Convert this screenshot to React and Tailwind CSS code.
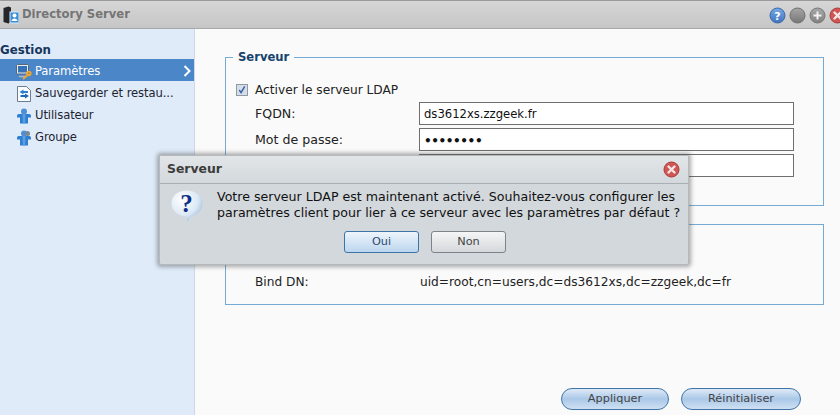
import React from 'react';

const font = { fontFamily: '"DejaVu Sans", Verdana, sans-serif' };

const RoundButton = ({ from, to, border, children }) => (
  <svg width="17" height="17" viewBox="0 0 17 17" className="shrink-0">
    <defs>
      <linearGradient id={`g${from.slice(1)}`} x1="0" y1="0" x2="0" y2="1">
        <stop offset="0" stopColor={from} />
        <stop offset="1" stopColor={to} />
      </linearGradient>
    </defs>
    <circle cx="8.5" cy="8.5" r="7.5" fill={`url(#g${from.slice(1)})`} stroke={border} />
    {children}
  </svg>
);

const CloseIcon = () => (
  <svg width="17" height="17" viewBox="0 0 17 17" className="shrink-0">
    <circle cx="8.5" cy="8.5" r="7.5" fill="#cf5654" stroke="#a83a3a" />
    <path d="M5.5 5.5l6 6M11.5 5.5l-6 6" stroke="#f4e6e6" strokeWidth="2.4" strokeLinecap="round" />
  </svg>
);

const AppIcon = () => (
  <svg width="16" height="18" viewBox="0 0 16 18" className="shrink-0">
    <path d="M0.500 2l5-1.500 2.500 1v14.500l-2.500 1.500-5-1.500z" fill="#26262a" />
    <rect x="7" y="6" width="9" height="11" fill="#3a8fd8" stroke="#d8e8f6" />
    <circle cx="11.500" cy="9.500" r="2" fill="#fff" />
    <path d="M8.500 15c0-3.500 6-3.500 6 0z" fill="#fff" />
  </svg>
);

const SettingsIcon = () => (
  <svg width="16" height="16" viewBox="0 0 16 16">
    <rect x="0.500" y="0.500" width="12" height="9.500" rx="1" fill="#e6ecf3" stroke="#56667a" />
    <rect x="2" y="2" width="9" height="6.500" fill="#3572b8" />
    <path d="M3 12.500h7" stroke="#aeb8c4" strokeWidth="1.500" />
    <circle cx="12.800" cy="9.500" r="2.800" fill="#eaa73a" />
    <circle cx="13" cy="9.300" r="0.800" fill="#a86f18" />
    <path d="M11 11.500l-4 3.500" stroke="#eaa73a" strokeWidth="2" />
  </svg>
);

const BackupIcon = () => (
  <svg width="16" height="16" viewBox="0 0 16 16">
    <path d="M1.500 0.500h9l4 4v11h-13z" fill="#fafcff" stroke="#6f7c8c" />
    <path d="M7.500 3.500l-4 2.500 4 2.500v-1.500h4.500v-2h-4.500z" fill="#2f7fd0" />
    <path d="M9 7.500l4 2.500-4 2.500v-1.500h-4.500v-2h4.500z" fill="#1f68b8" />
  </svg>
);

const UserIcon = ({ badge }) => (
  <svg width="16" height="16" viewBox="0 0 16 16">
    <circle cx="8" cy="3.500" r="3" fill="#4d8fd6" />
    {badge && <circle cx="11.500" cy="3.500" r="2.500" fill="#7c8794" />}
    <path d="M1 8c0-1.500 1-2 2-2h10c1 0 2 .5 2 2v1.500h-3v6h-8v-6h-3z" fill="#2f7fd0" />
    <path d="M6.500 6h3l-.5 9.500h-2z" fill="#5c9fe2" />
  </svg>
);

const GroupIcon = () => <UserIcon badge />;

const QuestionBubble = () => (
  <svg width="34" height="34" viewBox="0 0 34 34" className="shrink-0">
    <defs>
      <radialGradient id="bubble" cx="0.35" cy="0.3" r="0.85">
        <stop offset="0" stopColor="#ffffff" />
        <stop offset="0.6" stopColor="#dbe8f4" />
        <stop offset="1" stopColor="#86aed4" />
      </radialGradient>
    </defs>
    <path d="M17 1.500c8.500 0 15.500 5.500 15.500 13s-7 12.500-11.500 13l-3.500 5-1.500-5c-7-.5-14.500-5-14.500-13s6.500-13 15.500-13z" fill="url(#bubble)" />
    <text x="16.500" y="23" textAnchor="middle" fontSize="25" fontWeight="700" fill="#0d2f86" style={{ fontFamily: '"Liberation Serif", serif' }}>?</text>
  </svg>
);

const menu = [
  { label: 'Paramètres', Icon: SettingsIcon, active: true },
  { label: 'Sauvegarder et restau...', Icon: BackupIcon },
  { label: 'Utilisateur', Icon: UserIcon },
  { label: 'Groupe', Icon: GroupIcon },
];

const Field = ({ label, value, mask }) => (
  <div className="flex items-center h-[22px]">
    <span className="w-[164px] shrink-0 pt-[2px] text-[12.6px] text-[#222]">{label}</span>
    <div className="w-[375px] h-[23px] border border-[#6f6f6f] bg-white pl-1 pt-[3px] flex items-center text-[11.6px] text-[#111]">
      {mask ? <span className="text-[12px] font-bold tracking-[-0.4px]">{value}</span> : value}
    </div>
  </div>
);

export default function App() {
  return (
    <div className="relative w-[840px] h-[415px] overflow-hidden flex flex-col text-[12px] bg-[#fafafa]" style={font}>
      {/* Title bar */}
      <header className="h-[29px] shrink-0 flex items-center pl-[3px] border-t border-t-[#9a9a9a] border-b border-b-[#a8a8a8] bg-gradient-to-b from-[#d6d6d6] to-[#c6c6c6]">
        <AppIcon />
        <span className="ml-[3px] pt-[1px] text-[11.6px] font-bold text-[#757575]">Directory Server</span>
        <div className="ml-auto flex items-center gap-[3px] -mr-[6px] pt-[1px]">
          <RoundButton from="#79a9e2" to="#3d74c0" border="#3a68a8">
            <text x="8.500" y="12.500" textAnchor="middle" fontSize="11" fontWeight="700" fill="#fff">?</text>
          </RoundButton>
          <RoundButton from="#a6a6a6" to="#777777" border="#6e6e6e" />
          <RoundButton from="#a8a8a8" to="#808080" border="#767676">
            <path d="M8.500 4.500v8M4.500 8.500h8" stroke="#f2f2f2" strokeWidth="2" />
          </RoundButton>
          <CloseIcon />
        </div>
      </header>

      <div className="flex flex-1 min-h-0">
        {/* Sidebar */}
        <aside className="w-[195px] shrink-0 bg-[#e0ebfa] border-r border-r-[#cfd8e4] pt-[13px]">
          <h2 className="h-[17px] leading-[16px] text-[11.8px] font-bold text-[#16365c]">Gestion</h2>
          <ul className="text-[11.6px]">
            {menu.map(({ label, Icon, active }) => (
              <li
                key={label}
                className={`h-[22px] flex items-center pl-4 pr-[3px] gap-[3px] ${active ? 'bg-[#4a86c8] text-white' : 'text-[#1c2430]'}`}
              >
                <span className="pt-[3px] flex"><Icon /></span>
                <span className="flex-1 pt-[3px] whitespace-nowrap tracking-[-0.1px]">{label}</span>
                {active && (
                  <svg width="8" height="12" viewBox="0 0 8 12" className="mt-[1px]">
                    <path d="M1.500 1l5 5-5 5" fill="none" stroke="#fff" strokeWidth="2" />
                  </svg>
                )}
              </li>
            ))}
          </ul>
        </aside>

        {/* Main */}
        <main className="flex-1 flex flex-col pl-[30px] pr-[17px] pt-[21px] pb-[5px]">
          <fieldset className="h-[156px] border border-[#74aad4] shrink-0">
            <legend className="ml-[7px] px-[5px] text-[11.6px] font-bold text-[#16436e] leading-[15px]">Serveur</legend>
            <div className="pl-[29px] pr-[29px]">
              <div className="flex items-center gap-[6px] h-[20px] mt-[15px] text-[12.2px] text-[#222]">
                <span className="w-[12px] h-[12px] -ml-[19px] border border-[#8f9aa6] bg-[#d5dde6] flex items-center justify-center">
                  <svg width="10" height="10" viewBox="0 0 11 11">
                    <path d="M2.500 5.500l2 3 4-7" fill="none" stroke="#3a62a8" strokeWidth="1.600" />
                  </svg>
                </span>
                <span className="ml-[1px]">Activer le serveur LDAP</span>
              </div>
              <div className="mt-[2px] flex flex-col gap-1">
                <Field label="FQDN:" value="ds3612xs.zzgeek.fr" />
                <Field label="Mot de passe:" value="••••••••" mask />
                <Field label="" value="" />
              </div>
            </div>
          </fieldset>

          <section className="mt-[18px] h-[81px] border border-[#74aad4] pl-[29px] flex items-end pb-[13px] shrink-0 text-[12.2px] text-[#222]">
            <span className="w-[165px]">Bind DN:</span>
            <span>uid=root,cn=users,dc=ds3612xs,dc=zzgeek,dc=fr</span>
          </section>

          <div className="mt-auto flex justify-end gap-3 pr-[22px] text-[11.3px]">
            <button className="w-[108px] h-[22px] -translate-x-px rounded-full border border-[#3f74a8] bg-gradient-to-b from-[#dfeaf6] via-[#aac8e8] to-[#cfe0f2] text-[#444]">Appliquer</button>
            <button className="w-[120px] h-[22px] -translate-x-px rounded-full border border-[#3f74a8] bg-gradient-to-b from-[#dfeaf6] via-[#aac8e8] to-[#cfe0f2] text-[#444]">Réinitialiser</button>
          </div>
        </main>
      </div>

      {/* Dialog */}
      <div className="absolute left-[159px] top-[155px] w-[530px] h-[110px] flex flex-col rounded-[2px] border border-[#b4b9bd] bg-[#d3d8dc] shadow-[0_0_4px_2px_rgba(70,70,70,0.45)]">
        <div className="h-[28px] shrink-0 flex items-center justify-between pl-[7px] pr-[8px] border-b border-b-[#a9afb4] bg-gradient-to-b from-[#e2e6e9] to-[#d3d8dc]">
          <span className="text-[12.4px] font-bold text-[#3c3c3c]">Serveur</span>
          <CloseIcon />
        </div>
        <div className="flex-1 flex flex-col">
          <div className="flex pl-[10px] pt-[5px]">
            <QuestionBubble />
            <p className="ml-[13px] leading-[16px] text-[12.6px] text-[#111] whitespace-nowrap">
              Votre serveur LDAP est maintenant activé. Souhaitez-vous configurer les<br />
              paramètres client pour lier à ce serveur avec les paramètres par défaut ?
            </p>
          </div>
          <div className="flex justify-center gap-3 mt-[8px] pl-[2px] text-[11.3px]">
            <button className="w-[75px] h-[22px] rounded-[3px] border border-[#3f74a8] bg-gradient-to-b from-[#eef5fb] to-[#bcd6ee] text-[#2f4a70]">Oui</button>
            <button className="w-[75px] h-[22px] rounded-[3px] border border-[#7c8288] bg-gradient-to-b from-[#f4f5f6] to-[#d5d8db] text-[#444]">Non</button>
          </div>
        </div>
      </div>
    </div>
  );
}
